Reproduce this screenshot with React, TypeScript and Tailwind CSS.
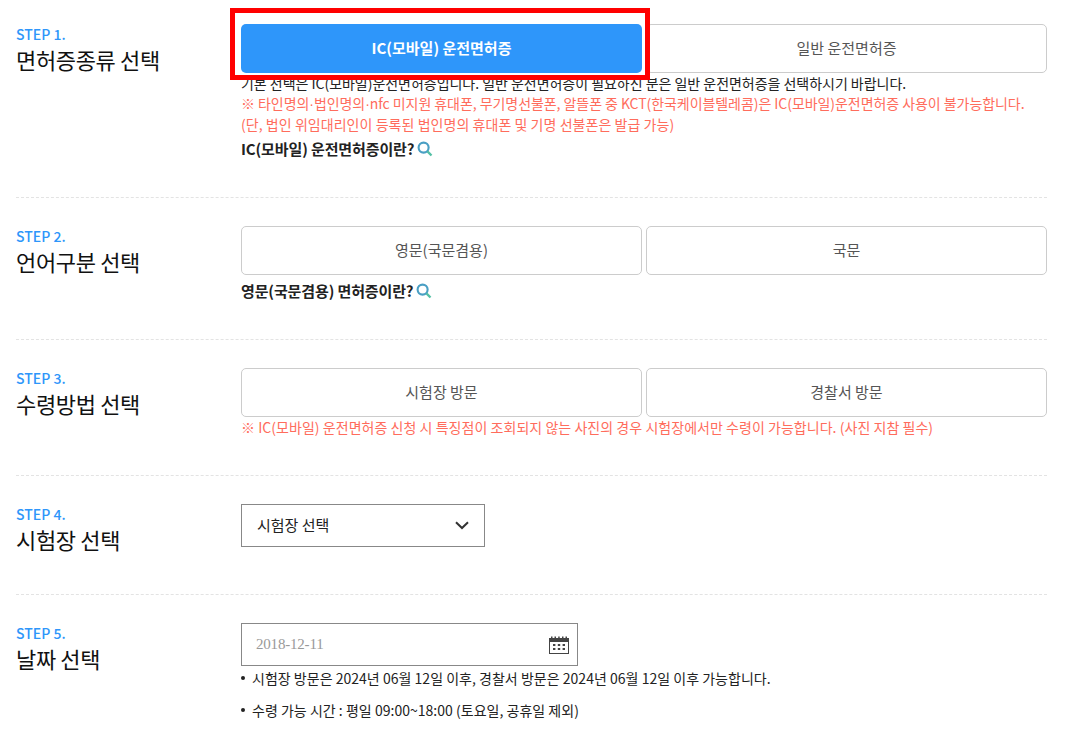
import { ReactNode } from 'react'

const KR = "font-['Noto_Sans_CJK_KR','Noto_Sans',sans-serif]"

function Step({ no, title, last, children, h }: { no: number; title: string; last?: boolean; children: ReactNode; h: string }) {
  return (
    <section className={`flex pt-[28px] ${h} ${last ? '' : 'border-b border-dashed border-[#e3e3e3]'}`}>
      <div className="w-[225px] shrink-0 pt-[1px]">
        <p className="text-[14px] leading-[18px] font-medium text-[#2e96fa]">STEP {no}.</p>
        <h2 className="text-[22px] leading-[32px] text-[#111] tracking-[-0.35px]">{title}</h2>
      </div>
      <div className="flex-1 min-w-0">{children}</div>
    </section>
  )
}

function Choice({ label, active }: { label: string; active?: boolean }) {
  return (
    <button
      className={`h-[49px] w-[401px] rounded-[5px] text-[15px] ${
        active ? 'bg-[#2e96fa] text-white font-bold' : 'border border-[#ccc] bg-white text-[#555]'
      }`}
    >
      {label}
    </button>
  )
}

function Lens() {
  return (
    <svg width="16" height="16" viewBox="0 0 15 15" fill="none" className="inline-block ml-[3px]">
      <circle cx="6.2" cy="6.2" r="4.7" stroke="#4a9fc4" strokeWidth="2" />
      <path d="M9.8 9.8L13.6 13.6" stroke="#54c0a5" strokeWidth="2.2" />
    </svg>
  )
}

function WhatIs({ children }: { children: ReactNode }) {
  return (
    <p className="flex items-center text-[15px] leading-[20px] font-bold text-[#222] tracking-[-0.12px]">
      {children}
      <Lens />
    </p>
  )
}

function Dot() {
  return <span className="font-['Liberation_Sans',sans-serif]">·</span>
}

export default function App() {
  return (
    <div className={`${KR} relative bg-white w-[1071px] h-[751px] overflow-hidden pl-[16px] pr-[24px]`}>
      {/* 강조 표시 */}
      <div className="absolute left-[230px] top-[8px] w-[420px] h-[72px] border-[5px] border-[#ff0000]" />

      <Step no={1} title="면허증종류 선택" h="h-[202px] -mt-[4px]">
        <div className="flex gap-[4px]">
          <Choice label="IC(모바일) 운전면허증" active />
          <Choice label="일반 운전면허증" />
        </div>
        <div className="text-[14px] leading-[20px]">
          <p className="text-[#222] tracking-[-0.03px]">기본 선택은 IC(모바일)운전면허증입니다. 일반 운전면허증이 필요하신 분은 일반 운전면허증을 선택하시기 바랍니다.</p>
          <p className="text-[#ff6c5c] tracking-[-0.06px]">※ 타인명의<Dot />법인명의<Dot />nfc 미지원 휴대폰, 무기명선불폰, 알뜰폰 중 KCT(한국케이블텔레콤)은 IC(모바일)운전면허증 사용이 불가능합니다.</p>
          <p className="text-[#ff6c5c] tracking-[0.05px]">(단, 법인 위임대리인이 등록된 법인명의 휴대폰 및 기명 선불폰은 발급 가능)</p>
        </div>
        <div className="mt-[5px]">
          <WhatIs>IC(모바일) 운전면허증이란?</WhatIs>
        </div>
      </Step>

      <Step no={2} title="언어구분 선택" h="h-[142px]">
        <div className="flex gap-[4px]">
          <Choice label="영문(국문겸용)" />
          <Choice label="국문" />
        </div>
        <div className="mt-[6px]">
          <WhatIs>영문(국문겸용) 면허증이란?</WhatIs>
        </div>
      </Step>

      <Step no={3} title="수령방법 선택" h="h-[136px]">
        <div className="flex gap-[4px]">
          <Choice label="시험장 방문" />
          <Choice label="경찰서 방문" />
        </div>
        <p className="text-[14px] leading-[20px] text-[#ff6c5c] tracking-[0.04px]">
          ※ IC(모바일) 운전면허증 신청 시 특징점이 조회되지 않는 사진의 경우 시험장에서만 수령이 가능합니다. (사진 지참 필수)
        </p>
      </Step>

      <Step no={4} title="시험장 선택" h="h-[119px]">
        <div className="flex items-center justify-between w-[244px] h-[43px] border border-[#888] pl-[15px] pr-[15px] text-[15px] text-[#222]">
          <span>시험장 선택</span>
          <svg width="14" height="9" viewBox="0 0 14 9" fill="none">
            <path d="M1 1.2L7 7L13 1.2" stroke="#333" strokeWidth="2" />
          </svg>
        </div>
      </Step>

      <Step no={5} title="날짜 선택" last h="h-[157px]">
        <div className="flex items-center justify-between w-[337px] h-[43px] border border-[#888] pl-[14px] pr-[8px]">
          <span className="font-['Liberation_Serif',serif] text-[15px] tracking-[-0.2px] text-[#999]">2018-12-11</span>
          <svg width="20" height="18" viewBox="0 0 20 18">
            <path d="M0 2h20v4H0zM2 0.5h1.5V2H2zM5.5 0.5H7V2H5.5zM9.2 0.5h1.5V2H9.2zM13 0.5h1.5V2H13zM16.5 0.5H18V2h-1.5z" fill="#444" />
            <rect x="0.5" y="5.5" width="19" height="12" fill="none" stroke="#444" />
            <path d="M4 8h2.4v2H4zM8.8 8h2.4v2H8.8zM13.6 8H16v2h-2.4zM4 12h2.4v2H4zM8.8 12h2.4v2H8.8zM13.6 12H16v2h-2.4z" fill="#444" />
          </svg>
        </div>
        <ul className="mt-[2px] text-[14px] text-[#222] tracking-[0.02px]">
          <li className="flex items-center h-[20px] mb-[12px]">
            <span className="w-[4px] h-[4px] rounded-full bg-[#222] mr-[7px]" />
            시험장 방문은 2024년 06월 12일 이후, 경찰서 방문은 2024년 06월 12일 이후 가능합니다.
          </li>
          <li className="flex items-center h-[20px]">
            <span className="w-[4px] h-[4px] rounded-full bg-[#222] mr-[7px]" />
            수령 가능 시간 : 평일 09:00~18:00 (토요일, 공휴일 제외)
          </li>
        </ul>
      </Step>
    </div>
  )
}
